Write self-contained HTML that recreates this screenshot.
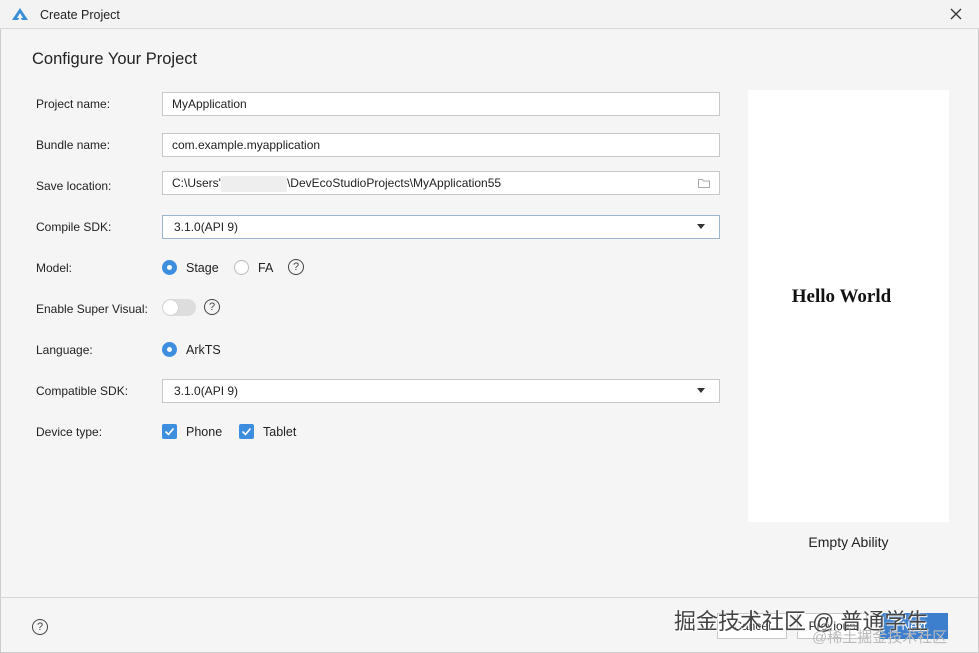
<!DOCTYPE html>
<html><head><meta charset="utf-8"><style>
*{margin:0;padding:0;box-sizing:border-box}
body{width:979px;height:653px;background:#f5f5f5;font-family:"Liberation Sans","Noto Sans CJK SC",sans-serif;font-size:12.5px;color:#222;position:relative;overflow:hidden}
.a{position:absolute}
.title{left:0;top:0;width:979px;height:29px;background:#f3f3f3;border-bottom:1px solid #d8d8d8}
.lbl{left:36px;font-size:12px;color:#222}
.in{left:162px;width:558px;height:24px;background:#fff;border:1px solid #c8c8c8;padding-left:9px;line-height:22px;font-size:12px}
.radio{width:15px;height:15px;border-radius:50%}
.on{background:#3e8ee0;border:none}
.on::after{content:"";position:absolute;left:5px;top:5px;width:5px;height:5px;border-radius:50%;background:#fff}
.off{border:1px solid #bbb;background:#fff}
.q{width:16px;height:16px;border:1.3px solid #444;border-radius:50%;font-size:11px;text-align:center;line-height:14px;color:#444}
.cb{width:15px;height:15px;background:#3e8ee0;border-radius:2px}
.btn{height:26px;border:1px solid #c8c8c8;background:#fff;font-size:12px;text-align:center;line-height:24px}
</style></head><body>
<div class="a title"></div>
<svg class="a" style="left:11px;top:7px" width="18" height="14" viewBox="0 0 18 14"><path d="M9 1L1 13h6l2-3 2 3h6z" fill="#3a8fd6"/><path d="M9 6L6 11h6z" fill="#f3f3f3"/></svg>
<div class="a" style="left:40px;top:8px;font-size:12.5px">Create Project</div>
<svg class="a" style="left:950px;top:8px" width="12" height="12"><path d="M1 1l10 10M11 1L1 11" stroke="#333" stroke-width="1.3"/></svg>
<div class="a" style="left:32px;top:50px;font-size:16.5px;color:#222">Configure Your Project</div>
<div class="a" style="left:0;top:29px;width:1px;height:624px;background:#ccc"></div>
<div class="a" style="left:978px;top:29px;width:1px;height:624px;background:#ccc"></div>

<div class="a lbl" style="top:97px">Project name:</div>
<div class="a in" style="top:92px">MyApplication</div>
<div class="a lbl" style="top:138px">Bundle name:</div>
<div class="a in" style="top:133px">com.example.myapplication</div>
<div class="a lbl" style="top:179px">Save location:</div>
<div class="a in" style="top:171px">C:\Users'<span style="display:inline-block;width:66px;height:16px;background:#eee;vertical-align:middle"></span>\DevEcoStudioProjects\MyApplication55</div>
<svg class="a" style="left:698px;top:178px" width="12" height="10"><path d="M.5 1.5h4l1 1.5h6v6.5H.5z" fill="none" stroke="#aaa"/></svg>
<div class="a lbl" style="top:220px">Compile SDK:</div>
<div class="a in" style="top:215px;border-color:#9cb6d2;padding-left:11px">3.1.0(API 9)</div>
<div class="a" style="left:697px;top:224px;border:4px solid transparent;border-top:5px solid #333"></div>
<div class="a lbl" style="top:261px">Model:</div>
<div class="a radio on" style="left:162px;top:260px"></div>
<div class="a" style="left:186px;top:261px">Stage</div>
<div class="a radio off" style="left:234px;top:260px"></div>
<div class="a" style="left:258px;top:261px">FA</div>
<div class="a q" style="left:288px;top:259px">?</div>
<div class="a lbl" style="top:302px">Enable Super Visual:</div>
<div class="a" style="left:162px;top:299px;width:34px;height:17px;border-radius:9px;background:#ddd"></div>
<div class="a" style="left:163px;top:300px;width:15px;height:15px;border-radius:50%;background:#fff;box-shadow:0 0 1px #999"></div>
<div class="a q" style="left:204px;top:299px">?</div>
<div class="a lbl" style="top:343px">Language:</div>
<div class="a radio on" style="left:162px;top:342px"></div>
<div class="a" style="left:186px;top:343px">ArkTS</div>
<div class="a lbl" style="top:384px">Compatible SDK:</div>
<div class="a in" style="top:379px;padding-left:11px">3.1.0(API 9)</div>
<div class="a" style="left:697px;top:388px;border:4px solid transparent;border-top:5px solid #333"></div>
<div class="a lbl" style="top:425px">Device type:</div>
<div class="a cb" style="left:162px;top:424px"><svg width="15" height="15"><path d="M3.5 7.5l3 3 5-6" fill="none" stroke="#fff" stroke-width="1.6"/></svg></div>
<div class="a" style="left:186px;top:425px">Phone</div>
<div class="a cb" style="left:239px;top:424px"><svg width="15" height="15"><path d="M3.5 7.5l3 3 5-6" fill="none" stroke="#fff" stroke-width="1.6"/></svg></div>
<div class="a" style="left:263px;top:425px">Tablet</div>

<div class="a" style="left:748px;top:90px;width:201px;height:432px;background:#fff"></div>
<div class="a" style="left:748px;top:286px;width:187px;text-align:center;font-family:'Liberation Serif',serif;font-weight:bold;font-size:19px;color:#111">Hello World</div>
<div class="a" style="left:748px;top:534px;width:201px;text-align:center;font-size:14px">Empty Ability</div>

<div class="a" style="left:0;top:597px;width:979px;border-top:1px solid #d5d5d5"></div>
<div class="a" style="left:0;top:652px;width:979px;border-top:1px solid #ccc"></div>
<div class="a q" style="left:32px;top:619px;width:16px;height:16px">?</div>
<div class="a btn" style="left:717px;top:613px;width:70px">Cancel</div>
<div class="a btn" style="left:797px;top:613px;width:70px">Previous</div>
<div class="a btn" style="left:880px;top:613px;width:68px;background:#3e7fcd;border-color:#3e7fcd;color:#fff">Next</div>
<div class="a" style="left:674px;top:604px;font-size:22px;color:#444;text-shadow:0 0 2px #fff,1px 1px 0 #fff">掘金技术社区 @ 普通学生</div>
<div class="a" style="left:812px;top:626px;font-size:15px;color:#bbb">@稀土掘金技术社区</div>
</body></html>
